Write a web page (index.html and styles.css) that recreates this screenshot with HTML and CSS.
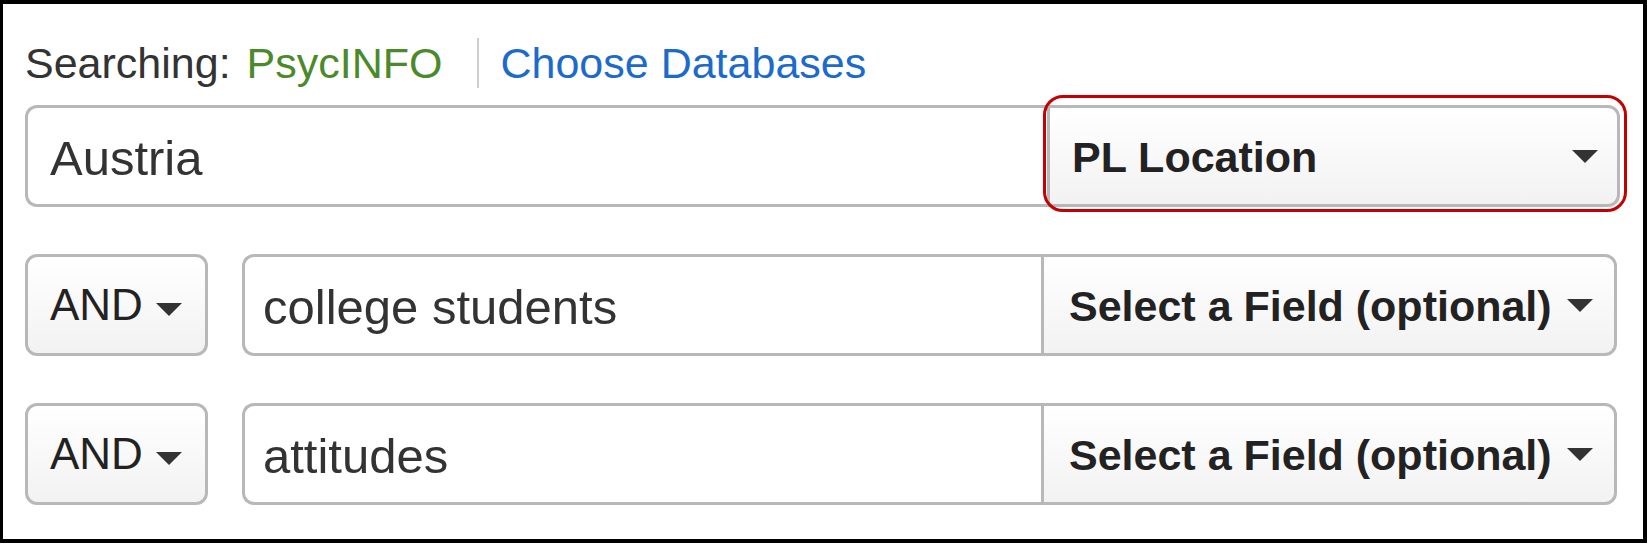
FILE: index.html
```html
<!DOCTYPE html>
<html lang="en">
<head>
<meta charset="utf-8">
<title>Search</title>
<link rel="stylesheet" href="styles.css">
</head>
<body>
<div class="frame">
  <div class="header">
    <span class="label">Searching:</span>
    <span class="db">PsycINFO</span>
    <span class="sep"></span>
    <a class="choose" href="#">Choose Databases</a>
  </div>

  <div class="row row-first">
    <div class="field field-first">Austria</div>
    <div class="select select-first highlighted">
      <span class="select-text">PL Location</span>
      <span class="caret"></span>
    </div>
  </div>

  <div class="row row-bool">
    <div class="bool"><span class="bool-text">AND</span><span class="caret caret-bool"></span></div>
    <div class="field field-bool">college students</div>
    <div class="select select-bool">
      <span class="select-text">Select a Field (optional)</span>
      <span class="caret"></span>
    </div>
  </div>

  <div class="row row-bool">
    <div class="bool"><span class="bool-text">AND</span><span class="caret caret-bool"></span></div>
    <div class="field field-bool">attitudes</div>
    <div class="select select-bool">
      <span class="select-text">Select a Field (optional)</span>
      <span class="caret"></span>
    </div>
  </div>
</div>
</body>
</html>
```

FILE: styles.css
```css
html, body {
  margin: 0;
  padding: 0;
  background: #fff;
}

body {
  font-family: "Liberation Sans", Arial, sans-serif;
  color: #333;
}

.frame {
  box-sizing: border-box;
  width: 1647px;
  height: 543px;
  border-style: solid;
  border-color: #000;
  border-width: 4px 4px 4px 3px;
  padding: 34px 23px 0 22px;
}

.header {
  display: flex;
  align-items: center;
  height: 50px;
  font-size: 43px;
  white-space: nowrap;
}

.label {
  color: #333;
}

.db {
  color: #4a8a2a;
  margin-left: 16px;
}

.sep {
  width: 2px;
  height: 50px;
  background: #cfcfcf;
  margin: 0 21px 0 35px;
}

.choose {
  color: #1c6bcc;
  text-decoration: none;
}

.row {
  display: flex;
  height: 102px;
  margin-top: 47px;
}

.row-first {
  margin-top: 17px;
}

.row-bool {
  margin-right: 3px;
}

.field {
  flex: 1;
  box-sizing: border-box;
  display: flex;
  align-items: center;
  border: 3px solid #b8b8b8;
  border-right: none;
  border-radius: 12px 0 0 12px;
  background: #fff;
  font-size: 49px;
  color: #333;
  padding-top: 4px;
  white-space: nowrap;
}

.field-first {
  padding-left: 22px;
}

.field-bool {
  padding-left: 18px;
}

.select {
  box-sizing: border-box;
  display: flex;
  align-items: center;
  justify-content: space-between;
  border: 3px solid #b8b8b8;
  border-radius: 0 12px 12px 0;
  background: linear-gradient(#ffffff, #f2f2f2);
  font-size: 43px;
  font-weight: bold;
  color: #222;
  white-space: nowrap;
}

.select-first {
  width: 573px;
  padding: 2px 19px 0 22px;
}

.select-bool {
  width: 576px;
  padding: 2px 21px 0 25px;
}

.highlighted {
  position: relative;
}

.highlighted::after {
  content: "";
  position: absolute;
  top: -13px;
  bottom: -8px;
  left: -7px;
  right: -10px;
  border: 3px solid #c40000;
  border-radius: 20px;
  pointer-events: none;
}

.caret {
  width: 0;
  height: 0;
  border-top: 13px solid #333;
  border-left: 13px solid transparent;
  border-right: 13px solid transparent;
  margin-top: -2px;
}

.bool {
  box-sizing: border-box;
  width: 183px;
  margin-right: 34px;
  display: flex;
  align-items: center;
  border: 3px solid #b8b8b8;
  border-radius: 12px;
  background: linear-gradient(#ffffff, #f2f2f2);
  padding: 0 0 0 22px;
  font-size: 44px;
  color: #222;
}

.caret-bool {
  margin-left: 13px;
  margin-top: 8px;
}
```
